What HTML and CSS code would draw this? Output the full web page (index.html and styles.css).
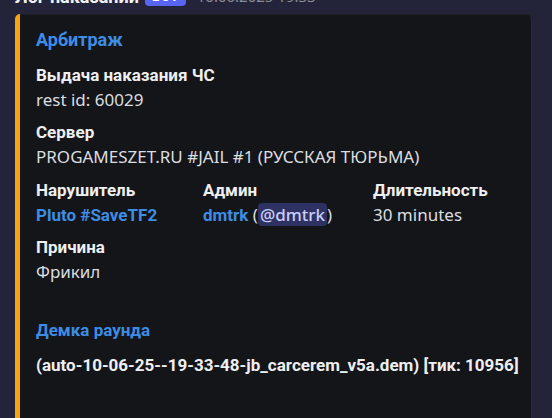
FILE: index.html
```html
<!DOCTYPE html>
<html lang="ru">
<head>
<meta charset="utf-8">
<link rel="stylesheet" href="styles.css">
</head>
<body>
<div class="message">
  <div class="header">
    <span class="author">Лог наказаний</span>
    <span class="bot">BOT</span>
    <span class="time">10.06.2025 19:33</span>
  </div>
  <div class="embed">
    <div class="title">Арбитраж</div>
    <div class="field">
      <div class="fname">Выдача наказания ЧС</div>
      <div class="fvalue">rest id: 60029</div>
    </div>
    <div class="field">
      <div class="fname">Сервер</div>
      <div class="fvalue">PROGAMESZET.RU #JAIL #1 (РУССКАЯ ТЮРЬМА)</div>
    </div>
    <div class="inline-row">
      <div class="field">
        <div class="fname">Нарушитель</div>
        <div class="fvalue"><span class="link">Pluto #SaveTF2</span></div>
      </div>
      <div class="field">
        <div class="fname">Админ</div>
        <div class="fvalue"><span class="link">dmtrk</span> (<span class="mention">@dmtrk</span>)</div>
      </div>
      <div class="field">
        <div class="fname">Длительность</div>
        <div class="fvalue">30 minutes</div>
      </div>
    </div>
    <div class="field">
      <div class="fname">Причина</div>
      <div class="fvalue">Фрикил<br>&nbsp;</div>
    </div>
    <div class="field demo">
      <div class="fname link">Демка раунда</div>
      <div class="fvalue strong">(auto-10-06-25--19-33-48-jb_carcerem_v5a.dem) [тик: 10956]</div>
    </div>
  </div>
</div>
</body>
</html>
```
FILE: styles.css
```css
html, body {
  margin: 0;
  padding: 0;
  background: #232439;
  overflow: hidden;
}
body {
  font-family: "Noto Sans", "Open Sans", sans-serif;
  color: #dbdee1;
  width: 552px;
  height: 418px;
}
.message {
  padding-left: 15px;
}
.header {
  margin-top: -17.5px;
  height: 27.5px;
  line-height: 27.5px;
  display: flex;
  align-items: center;
  gap: 6px;
  white-space: nowrap;
}
.author {
  font-family: Roboto, "Noto Sans", sans-serif;
  font-size: 18px;
  font-weight: 700;
  color: #f2f3f5;
}
.bot {
  font-family: Roboto, "Noto Sans", sans-serif;
  background: #5865f2;
  color: #fff;
  font-size: 14px;
  font-weight: 700;
  line-height: 19px;
  padding: 0 7px;
  border-radius: 4px;
  margin-left: 0;
}
.time {
  font-size: 15px;
  color: #8a8d96;
  margin-left: 5px;
}
.embed {
  margin-top: 4px;
  width: 517px;
  height: 420px;
  box-sizing: border-box;
  background: #141518;
  border-left: 5px solid #f9a30f;
  border-radius: 5px;
  padding: 12px 4px 0 16px;
  box-shadow: inset -1px 0 0 #2a2b31, inset 0 1px 0 #1e1f24;
}
.title {
  font-family: Roboto, "Noto Sans", sans-serif;
  font-size: 18px;
  font-weight: 700;
  line-height: 27.5px;
  color: #3d8de5;
}
.field {
  margin-top: 10px;
}
.fname {
  font-family: Roboto, "Noto Sans", sans-serif;
  font-size: 17px;
  font-weight: 700;
  line-height: 22.5px;
  color: #eeeff1;
  margin-bottom: 2.5px;
}
.fvalue {
  font-size: 17px;
  line-height: 22.5px;
  color: #dbdee1;
}
.inline-row {
  display: grid;
  grid-template-columns: 167px 170px 1fr;
}
.link {
  font-family: Roboto, "Noto Sans", sans-serif;
  color: #3d8de5;
  font-weight: 700;
}
.mention {
  background: #2e3263;
  color: #c9cdfb;
  border-radius: 4px;
  padding: 0 2px;
  font-weight: 500;
}
.demo {
  margin-top: 13px;
}
.demo .fname {
  margin-bottom: 12px;
}
.strong {
  font-family: Roboto, "Noto Sans", sans-serif;
  font-size: 17px;
  font-weight: 700;
  white-space: nowrap;
  color: #eeeff1;
}
```
